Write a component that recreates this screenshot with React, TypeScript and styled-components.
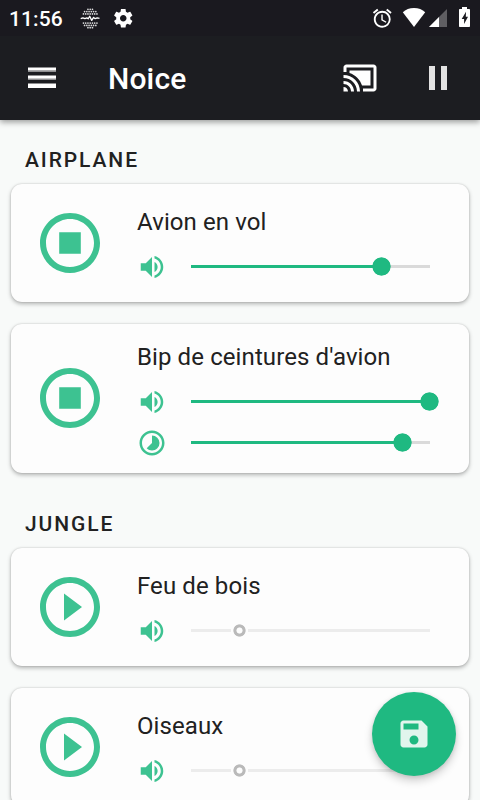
import React from 'react';
import styled, { createGlobalStyle } from 'styled-components';

const GlobalStyle = createGlobalStyle`
  *, *::before, *::after { box-sizing: border-box; }
  html, body { margin: 0; padding: 0; height: 100%; overflow: hidden; }
  body { background: #f8faf9; font-family: Roboto, sans-serif; color: #212121; }
  svg { display: block; flex: none; }
`;

const Screen = styled.div`
  position: relative;
  display: flex;
  flex-direction: column;
  width: 480px;
  height: 800px;
  overflow: hidden;
  background: #f8faf9;
`;

const StatusBar = styled.div`
  display: flex;
  flex: none;
  align-items: center;
  height: 36px;
  padding: 0 9px;
  background: #1a191f;
  color: #fff;
  z-index: 1;
`;

const Clock = styled.span`
  width: 70px;
  padding-top: 1px;
  font-size: 21px;
  font-weight: 500;
  line-height: 36px;
  letter-spacing: 0.1px;
`;

const NotificationIcons = styled.div`
  display: flex;
  flex: 1;
  align-items: center;
  gap: 11px;
`;

const SystemIcons = styled.div`
  display: flex;
  align-items: center;
  gap: 8px;
`;

const AppBar = styled.header`
  display: flex;
  flex: none;
  align-items: center;
  height: 84px;
  padding: 0 24px;
  background: #1c1d21;
  color: #fff;
  box-shadow: 0 2px 6px rgba(0, 0, 0, 0.4);
`;

const IconButton = styled.button`
  display: flex;
  align-items: center;
  justify-content: center;
  width: 36px;
  height: 36px;
  padding: 0;
  border: 0;
  background: none;
  color: inherit;
`;

const AppTitle = styled.h1`
  flex: 1;
  margin: 0 0 0 48px;
  padding-top: 2px;
  font-size: 30px;
  font-weight: 500;
  line-height: 36px;
  letter-spacing: 0.15px;
`;

const Actions = styled.div`
  display: flex;
  gap: 42px;
`;

const SoundList = styled.main`
  display: flex;
  flex: 1;
  flex-direction: column;
  min-height: 0;
  padding: 0 11px;
`;

const GroupTitle = styled.h2<{ $first?: boolean }>`
  flex: none;
  margin: ${(p) => (p.$first ? 0 : 11)}px 0 0;
  padding: 28px 14px 11px;
  font-size: 21px;
  font-weight: 500;
  line-height: 25px;
  letter-spacing: 1.9px;
  text-transform: uppercase;
`;

const Cards = styled.div`
  display: flex;
  flex: none;
  flex-direction: column;
  gap: 22px;
`;

const Card = styled.article<{ $tall?: boolean }>`
  display: flex;
  flex: none;
  align-items: center;
  height: ${(p) => (p.$tall ? 149 : 118)}px;
  padding-left: 23px;
  border-radius: 11px;
  background: #fdfdfd;
  box-shadow: 0 2px 4px rgba(0, 0, 0, 0.28), 0 0 2px rgba(0, 0, 0, 0.18);
`;

const PlayButton = styled.button<{ $tall?: boolean }>`
  width: 72px;
  height: 72px;
  margin-bottom: ${(p) => (p.$tall ? 1 : 0)}px;
  padding: 0;
  border: 0;
  background: none;
  color: #3dc291;
`;

const Details = styled.div`
  flex: 1;
  padding: 9px 0 0 31px;
`;

const SoundName = styled.h3`
  margin: 0 0 10px;
  font-size: 24px;
  font-weight: 400;
  line-height: 28px;
  letter-spacing: 0.1px;
`;

const ControlRow = styled.div`
  display: flex;
  align-items: center;
  height: 41px;
  color: #3dc291;
`;

const Track = styled.div<{ $enabled: boolean }>`
  position: relative;
  width: 239px;
  height: 3px;
  margin: 0 0 1px 24px;
  background: ${(p) => (p.$enabled ? '#dadada' : '#ececec')};
`;

const Fill = styled.div`
  height: 3px;
  background: #1fb981;
`;

const Thumb = styled.div<{ $enabled: boolean }>`
  position: absolute;
  top: -8px;
  width: 19px;
  height: 19px;
  margin-left: -9.5px;
  border-radius: 50%;
  background: ${(p) =>
    p.$enabled
      ? 'radial-gradient(circle, #1fb981 8.8px, rgba(31, 185, 129, 0) 9.6px)'
      : 'radial-gradient(circle, #fdfdfd 2.7px, #bababa 3.4px, #bababa 5.7px, #fdfdfd 6.5px, #fdfdfd 8.4px, rgba(253, 253, 253, 0) 8.8px)'};
`;

const SaveButton = styled.button`
  position: absolute;
  right: 24px;
  bottom: 24px;
  display: flex;
  align-items: center;
  justify-content: center;
  width: 84px;
  height: 84px;
  padding: 0;
  border: 0;
  border-radius: 50%;
  background: #1fb981;
  color: #e1f5ed;
  box-shadow: 0 5px 9px rgba(0, 0, 0, 0.18), 0 1px 4px rgba(0, 0, 0, 0.1);
`;

interface GlyphProps {
  d: string;
  size: number;
}

const Glyph = ({ d, size }: GlyphProps) => (
  <svg width={size} height={size} viewBox="0 0 24 24" fill="currentColor">
    <path d={d} />
  </svg>
);

const paths = {
  volume:
    'M3 9v6h4l5 5V4L7 9H3zm13.5 3c0-1.77-1.02-3.29-2.5-4.03v8.05c1.48-.73 2.5-2.25 2.5-4.02zM14 3.23v2.06c2.89.86 5 3.54 5 6.71s-2.11 5.85-5 6.71v2.06c4.01-.91 7-4.49 7-8.77s-2.99-7.86-7-8.77z',
  timelapse:
    'M16.24 7.76A5.974 5.974 0 0 0 12 6v6l-4.24 4.24c2.34 2.34 6.14 2.34 8.49 0a5.99 5.99 0 0 0-.01-8.48zM12 2C6.48 2 2 6.48 2 12s4.48 10 10 10 10-4.48 10-10S17.52 2 12 2zm0 18c-4.42 0-8-3.58-8-8s3.58-8 8-8 8 3.58 8 8-3.58 8-8 8z',
  play: 'M10 16.5l6-4.5-6-4.5v9zM12 2C6.48 2 2 6.48 2 12s4.48 10 10 10 10-4.48 10-10S17.52 2 12 2zm0 18c-4.41 0-8-3.59-8-8s3.59-8 8-8 8 3.59 8 8-3.59 8-8 8z',
  stop: 'M8.4 8.4h7.2v7.2H8.4zM12 2C6.48 2 2 6.48 2 12s4.48 10 10 10 10-4.48 10-10S17.52 2 12 2zm0 18c-4.41 0-8-3.59-8-8s3.59-8 8-8 8 3.59 8 8-3.59 8-8 8z',
  save: 'M17 3H5c-1.11 0-2 .9-2 2v14c0 1.1.89 2 2 2h14c1.1 0 2-.9 2-2V7l-4-4zm-5 16c-1.66 0-3-1.34-3-3s1.34-3 3-3 3 1.34 3 3-1.34 3-3 3zm3-10H5V5h10v4z',
  cast: 'M1 18v3h3c0-1.66-1.34-3-3-3zm0-4v2c2.76 0 5 2.24 5 5h2c0-3.87-3.13-7-7-7zm18-7H5v1.63c3.96 1.28 7.09 4.41 8.37 8.37H19V7zM1 10v2c4.97 0 9 4.03 9 9h2c0-6.08-4.93-11-11-11zm20-7H3c-1.1 0-2 .9-2 2v3h2V5h18v14h-7v2h7c1.1 0 2-.9 2-2V5c0-1.1-.9-2-2-2z',
  settings:
    'M19.43 12.98c.04-.32.07-.64.07-.98s-.03-.66-.07-.98l2.11-1.65c.19-.15.24-.42.12-.64l-2-3.46c-.12-.22-.39-.3-.61-.22l-2.49 1c-.52-.4-1.08-.73-1.69-.98l-.38-2.65A.488.488 0 0 0 14 2h-4c-.25 0-.46.18-.49.42l-.38 2.65c-.61.25-1.17.59-1.69.98l-2.49-1c-.23-.09-.49 0-.61.22l-2 3.46c-.13.22-.07.49.12.64l2.11 1.65c-.04.32-.07.65-.07.98s.03.66.07.98l-2.11 1.65c-.19.15-.24.42-.12.64l2 3.46c.12.22.39.3.61.22l2.49-1c.52.4 1.08.73 1.69.98l.38 2.65c.03.24.24.42.49.42h4c.25 0 .46-.18.49-.42l.38-2.65c.61-.25 1.17-.59 1.69-.98l2.49 1c.23.09.49 0 .61-.22l2-3.46c.12-.22.07-.49-.12-.64l-2.11-1.65zM12 15.5c-1.93 0-3.5-1.57-3.5-3.5s1.57-3.5 3.5-3.5 3.5 1.57 3.5 3.5-1.57 3.5-3.5 3.5z',
  alarm:
    'M22 5.72l-4.6-3.86-1.29 1.53 4.6 3.86L22 5.72zM7.88 3.39L6.6 1.86 2 5.71l1.29 1.53 4.59-3.85zM12.5 8H11v6l4.75 2.85.75-1.23-4-2.37V8zM12 4c-4.97 0-9 4.03-9 9s4.02 9 9 9a9 9 0 0 0 0-18zm0 16c-3.87 0-7-3.13-7-7s3.13-7 7-7 7 3.13 7 7-3.13 7-7 7z',
};

const dotRows = [
  { y: 1.3, n: 3 },
  { y: 3.6, n: 6 },
  { y: 5.9, n: 7 },
  { y: 15.1, n: 7 },
  { y: 17.4, n: 6 },
  { y: 19.7, n: 3 },
];

const NoiseIcon = () => (
  <svg width="22" height="21" viewBox="0 0 22 21">
    {dotRows.map(({ y, n }) =>
      Array.from({ length: n }, (_, i) => (
        <circle key={`${y}-${i}`} cx={11.2 + (i - (n - 1) / 2) * 2.25} cy={y} r="0.85" fill="#fff" fillOpacity="0.85" />
      )),
    )}
    <path
      d="M1.700 10.700l2.200-.9 2 .9 2-.8 1.300.9 1.500-2.600 2 4.200 1.900-3 1.600 1.300 2-.9 2.300.6"
      fill="none"
      stroke="#fff"
      strokeWidth="1.3"
      strokeLinejoin="round"
    />
  </svg>
);

const SignalIcons = () => (
  <svg width="70" height="22" viewBox="401 7 70 22" fill="#fff">
    <path d="M414 27L402.800 12.200C405.700 9.500 409.500 8 414 8s8.300 1.500 11.200 4.200z" />
    <path d="M447 9v18h-18z" fillOpacity="0.3" />
    <path d="M439 17v10h-10z" />
    <path
      fillRule="evenodd"
      d="M462 7h5v2h2c.6 0 1 .4 1 1v16c0 .6-.4 1-1 1h-9c-.6 0-1-.4-1-1V10c0-.6.4-1 1-1h2zM466 11.800l-4.300 7.300h2.400v5l3.900-7.300h-2.200z"
    />
  </svg>
);

const MenuIcon = () => (
  <svg width="28" height="22" viewBox="0 0 28 22" fill="#fff">
    <path d="M0 0h28v5H0zM0 8h28v5H0zM0 16h28v1H0z" fillOpacity="0.5" />
    <path d="M0 1h28v2.300H0zM0 9h28v2.500H0zM0 17h28v4H0z" />
  </svg>
);

interface LevelProps {
  icon: string;
  value: number;
  enabled: boolean;
}

const Level = ({ icon, value, enabled }: LevelProps) => (
  <ControlRow>
    <Glyph d={icon} size={30} />
    <Track $enabled={enabled}>
      {enabled && <Fill style={{ width: `${value}%` }} />}
      <Thumb $enabled={enabled} style={{ left: `${value}%` }} />
    </Track>
  </ControlRow>
);

interface Sound {
  name: string;
  playing: boolean;
  volume: number;
  interval?: number;
}

const groups: { title: string; sounds: Sound[] }[] = [
  {
    title: 'Airplane',
    sounds: [
      { name: 'Avion en vol', playing: true, volume: 79.7 },
      { name: "Bip de ceintures d'avion", playing: true, volume: 99.75, interval: 88.45 },
    ],
  },
  {
    title: 'Jungle',
    sounds: [
      { name: 'Feu de bois', playing: false, volume: 20.3 },
      { name: 'Oiseaux', playing: false, volume: 20.3 },
    ],
  },
];

const SoundCard = ({ name, playing, volume, interval }: Sound) => {
  const tall = interval !== undefined;
  return (
    <Card $tall={tall}>
      <PlayButton $tall={tall} aria-label={playing ? 'Stop' : 'Play'}>
        <Glyph d={playing ? paths.stop : paths.play} size={72} />
      </PlayButton>
      <Details>
        <SoundName>{name}</SoundName>
        <Level icon={paths.volume} value={volume} enabled={playing} />
        {interval !== undefined && <Level icon={paths.timelapse} value={interval} enabled={playing} />}
      </Details>
    </Card>
  );
};

export default function App() {
  return (
    <Screen>
      <GlobalStyle />
      <StatusBar>
        <Clock>11:56</Clock>
        <NotificationIcons>
          <NoiseIcon />
          <Glyph d={paths.settings} size={22.5} />
        </NotificationIcons>
        <SystemIcons>
          <Glyph d={paths.alarm} size={22.5} />
          <SignalIcons />
        </SystemIcons>
      </StatusBar>
      <AppBar>
        <IconButton aria-label="Menu">
          <MenuIcon />
        </IconButton>
        <AppTitle>Noice</AppTitle>
        <Actions>
          <IconButton aria-label="Cast">
            <Glyph d={paths.cast} size={36} />
          </IconButton>
          <IconButton aria-label="Pause">
            <svg width="18" height="24" viewBox="0 0 18 24" fill="#e2e2e2">
              <path d="M0 0h6v24H0zM12 0h6v24h-6z" />
            </svg>
          </IconButton>
        </Actions>
      </AppBar>
      <SoundList>
        {groups.map((group, index) => (
          <React.Fragment key={group.title}>
            <GroupTitle $first={index === 0}>{group.title}</GroupTitle>
            <Cards>
              {group.sounds.map((sound) => (
                <SoundCard key={sound.name} {...sound} />
              ))}
            </Cards>
          </React.Fragment>
        ))}
      </SoundList>
      <SaveButton aria-label="Save">
        <Glyph d={paths.save} size={36} />
      </SaveButton>
    </Screen>
  );
}
